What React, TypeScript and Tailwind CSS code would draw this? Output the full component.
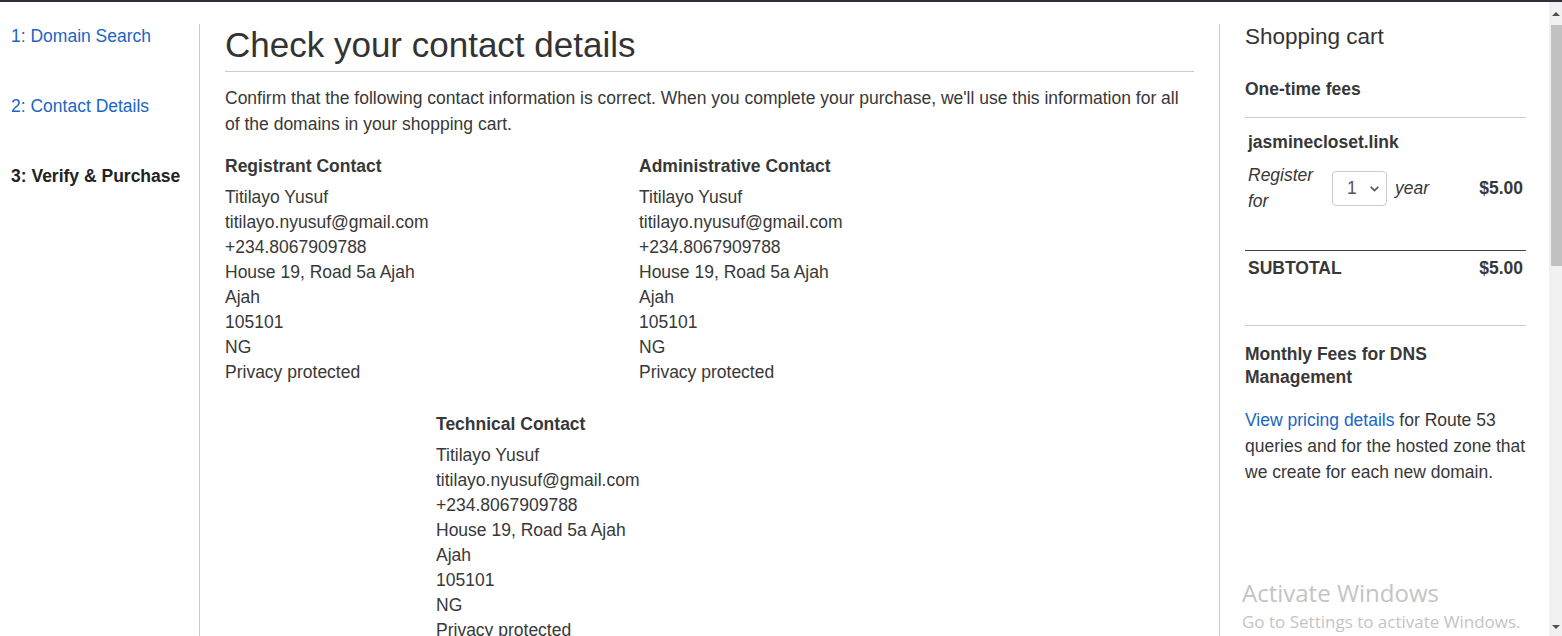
import React from "react";

const contact = [
  "Titilayo Yusuf",
  "titilayo.nyusuf@gmail.com",
  "+234.8067909788",
  "House 19, Road 5a Ajah",
  "Ajah",
  "105101",
  "NG",
  "Privacy protected",
];

function Contact({ title }: { title: string }) {
  return (
    <div>
      <div className="font-bold leading-[25px]">{title}</div>
      <div className="mt-[6px]">
        {contact.map((l, i) => (
          <div key={i} className="leading-[25px]">
            {l}
          </div>
        ))}
      </div>
    </div>
  );
}

export default function App() {
  return (
    <div
      className="relative h-[636px] w-[1562px] overflow-hidden bg-white text-[17.5px] text-[#383838]"
      style={{ fontFamily: '"Liberation Sans", Arial, sans-serif' }}
    >
      <div className="h-[2px] bg-[#2a313b]" />
      <div className="flex h-[634px]">
        <div className="flex flex-1 pt-[22px]">
          {/* Left nav */}
          <div className="w-[200px] shrink-0 border-r border-[#ccc] pl-[11px]">
            <div className="flex flex-col gap-[46px]">
              <a className="leading-[24px] text-[#1a66c4]">1: Domain Search</a>
              <a className="leading-[24px] text-[#1a66c4]">2: Contact Details</a>
              <div className="font-bold leading-[24px] text-[#222]">3: Verify &amp; Purchase</div>
            </div>
          </div>

          {/* Main */}
          <div className="w-[1019px] shrink-0 px-[25px]">
            <h1 className="border-b border-[#ccc] pb-[5px] text-[35px] leading-[42px] text-[#333]">
              Check your contact details
            </h1>
            <p className="mt-[13px] leading-[26px]">
              Confirm that the following contact information is correct. When you complete your purchase, we'll use this
              information for all of the domains in your shopping cart.
            </p>
            <div className="mt-[17px] grid grid-cols-[414px_414px]">
              <Contact title="Registrant Contact" />
              <Contact title="Administrative Contact" />
            </div>
            <div className="ml-[211px] mt-[27px]">
              <Contact title="Technical Contact" />
            </div>
          </div>

          {/* Cart */}
          <div className="w-[330px] shrink-0 border-l border-[#ccc] pl-[25px] pr-[23px]">
            <h2 className="text-[22.5px] leading-[26px] text-[#333]">Shopping cart</h2>
            <div className="mt-[28px] font-bold leading-[22px]">One-time fees</div>
            <div className="mt-[17px] border-t border-[#ccc]" />
            <div className="pl-[3px] pr-[3px]">
              <div className="mt-[12px] font-bold leading-[24px]">jasminecloset.link</div>
              <div className="mt-[8px] flex items-center">
                <div className="w-[84px] italic leading-[26px]">
                  Register
                  <br />
                  for
                </div>
                <div className="flex h-[35px] w-[55px] items-center justify-between rounded-[4px] border border-[#ccc] pl-[14px] pr-[5px] text-[#555]">
                  <span>1</span>
                  <svg width="13" height="13" viewBox="0 0 12 12">
                    <path d="M2.5 4.5 L6 8 L9.5 4.5" fill="none" stroke="#555" strokeWidth="1.5" />
                  </svg>
                </div>
                <div className="ml-[8px] italic">year</div>
                <div className="ml-auto font-bold">$5.00</div>
              </div>
            </div>
            <div className="mt-[36px] border-t border-[#444]" />
            <div className="mt-[6px] flex pl-[3px] pr-[3px] font-bold leading-[22px]">
              <span>SUBTOTAL</span>
              <span className="ml-auto">$5.00</span>
            </div>
            <div className="mt-[46px] border-t border-[#ccc]" />
            <div className="mt-[17px] font-bold leading-[23px]">
              Monthly Fees for DNS
              <br />
              Management
            </div>
            <p className="mt-[18px] leading-[26px]">
              <span className="text-[#1a66c4]">View pricing details</span> for Route 53 queries and for the hosted zone
              that we create for each new domain.
            </p>
          </div>
        </div>

        {/* Scrollbar */}
        <div className="relative w-[13px] shrink-0 bg-[#f1f1f1]">
          <svg className="absolute left-[3px] top-[9px]" width="8" height="6" viewBox="0 0 8 6">
            <path d="M0 5 L4 1 L8 5 Z" fill="#505050" />
          </svg>
          <div className="absolute left-[2px] right-0 top-[23px] h-[241px] bg-[#c1c1c1]" />
          <svg className="absolute bottom-[6px] left-[3px]" width="8" height="6" viewBox="0 0 8 6">
            <path d="M0 1 L4 5 L8 1 Z" fill="#505050" />
          </svg>
        </div>
      </div>

      {/* Activate Windows watermark */}
      <div
        className="pointer-events-none absolute left-[1242px] top-[577px] text-[#c4c4c4]"
        style={{ fontFamily: '"Open Sans", "Noto Sans", sans-serif' }}
      >
        <div className="text-[24px] leading-[32px]">Activate Windows</div>
        <div className="text-[17px] leading-[26px]">Go to Settings to activate Windows.</div>
      </div>
    </div>
  );
}
